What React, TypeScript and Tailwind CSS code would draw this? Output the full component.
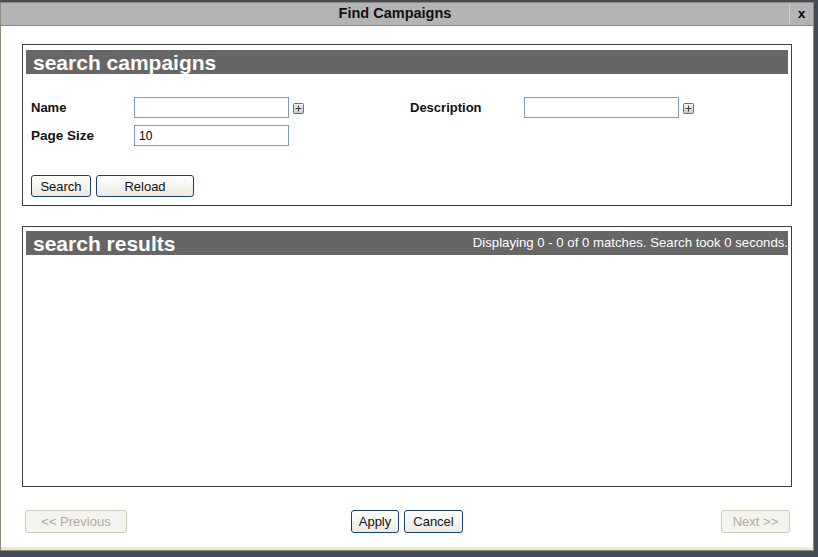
import React from "react";

const font = { fontFamily: '"Liberation Sans", Arial, sans-serif' };

function PlusIcon() {
  return (
    <svg width="11" height="11" viewBox="0 0 11 11" className="shrink-0">
      <defs>
        <linearGradient id="pg" x1="0" y1="0" x2="0" y2="1">
          <stop offset="0" stopColor="#f4f4f4" />
          <stop offset="1" stopColor="#c8c8c8" />
        </linearGradient>
      </defs>
      <rect x="0.5" y="0.5" width="10" height="10" rx="1" fill="url(#pg)" stroke="#6e6e6e" />
      <path d="M2.5 5.5h6M5.5 2.5v6" stroke="#404040" strokeWidth="1" />
    </svg>
  );
}

function Btn({ children, w, h = "h-[22px]", disabled }: { children: React.ReactNode; w: string; h?: string; disabled?: boolean }) {
  return (
    <button
      className={
        disabled
          ? `${w} ${h} shrink-0 rounded-[3px] border border-[#cfcbb9] bg-[#f4f3ee] text-[13px] text-[#adab9f] leading-none`
          : `${w} ${h} shrink-0 rounded-[3px] border border-[#1d3f6e] bg-gradient-to-b from-[#ffffff] to-[#ece9df] text-[13px] text-[#111] leading-none`
      }
      style={font}
    >
      {children}
    </button>
  );
}

export default function App() {
  return (
    <div className="w-[818px] h-[557px] bg-[#444b56] overflow-hidden pt-[2px] pr-[4px]" style={font}>
      <div className="h-[549px] border border-[#8d8a7e] bg-white flex flex-col">
        {/* title bar */}
        <div className="h-[23px] bg-[#b4b4b4] border-b border-[#858585] flex shrink-0">
          <div className="flex-1 flex items-center justify-center text-[14.5px] font-bold text-[#111]">
            Find Campaigns
          </div>
          <div className="w-[24px] border-l border-[#cfcfcf] flex items-center justify-center text-[13px] font-bold text-black">
            x
          </div>
        </div>

        <div className="flex-1 border-b-[3px] border-[#ece9d8] px-[21px] pt-[18px] flex flex-col">
          {/* search panel */}
          <div className="h-[162px] border border-[#3f3f3f] pt-[5px] px-[3px]">
            <div className="h-[24px] bg-[#666666] flex items-center pl-[7px] text-[21px] font-bold text-white leading-none">
              search campaigns
            </div>
            <div className="pl-[5px] pt-[23px]">
              <div className="flex items-center h-[21px]">
                <div className="w-[103px] text-[13px] font-bold text-[#111] pt-[1px]">Name</div>
                <input className="w-[155px] h-[21px] border border-[#7f9db9] px-[4px] text-[12px] outline-none" />
                <div className="ml-[4px] mt-[2px]"><PlusIcon /></div>
                <div className="w-[106px]" />
                <div className="w-[114px] text-[13px] font-bold text-[#111] pt-[1px]">Description</div>
                <input className="w-[155px] h-[21px] border border-[#7f9db9] px-[4px] text-[12px] outline-none" />
                <div className="ml-[4px] mt-[2px]"><PlusIcon /></div>
              </div>
              <div className="flex items-center h-[21px] mt-[7px]">
                <div className="w-[103px] text-[13.5px] font-bold text-[#111] pt-[1px]">Page Size</div>
                <input
                  defaultValue="10"
                  className="w-[155px] h-[21px] border border-[#7f9db9] px-[4px] text-[12px] text-black outline-none"
                  style={font}
                />
              </div>
              <div className="flex gap-[5px] mt-[29px]">
                <Btn w="w-[60px]">Search</Btn>
                <Btn w="w-[98px]">Reload</Btn>
              </div>
            </div>
          </div>

          {/* results panel */}
          <div className="h-[261px] mt-[20px] border border-[#3f3f3f] pt-[4px] px-[3px]">
            <div className="h-[24px] bg-[#666666] flex items-center justify-between pl-[7px] text-white">
              <span className="text-[21px] font-bold leading-none">search results</span>
              <span className="text-[13.2px] leading-none">Displaying 0 - 0 of 0 matches. Search took 0 seconds.</span>
            </div>
          </div>

          {/* footer */}
          <div className="mt-[23px] flex items-center pl-[3px] pr-[2px]">
            <Btn w="w-[102px]" h="h-[23px]" disabled>&lt;&lt; Previous</Btn>
            <div className="flex gap-[5px] ml-[224px]">
              <Btn w="w-[48px]" h="h-[23px]">Apply</Btn>
              <Btn w="w-[59px]" h="h-[23px]">Cancel</Btn>
            </div>
            <div className="flex-1" />
            <Btn w="w-[69px]" h="h-[23px]" disabled>Next &gt;&gt;</Btn>
          </div>
        </div>
      </div>
    </div>
  );
}
